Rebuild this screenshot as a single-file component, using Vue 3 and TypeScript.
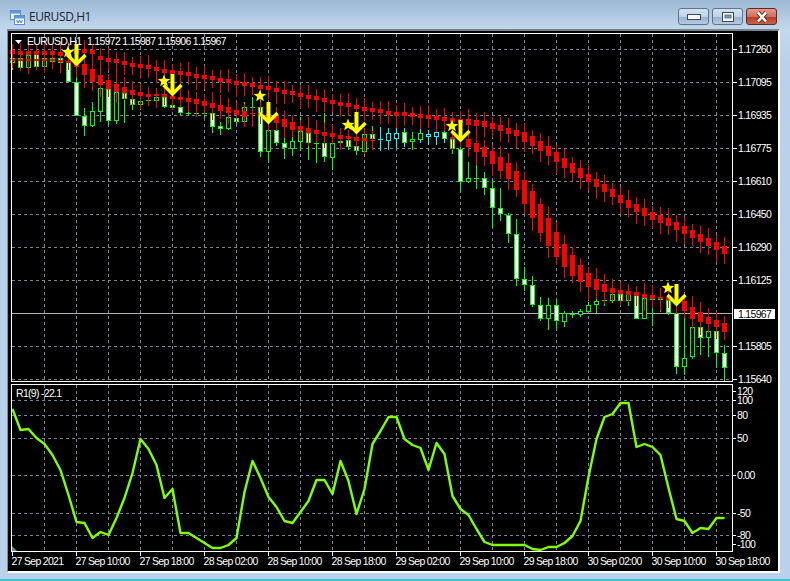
<script setup lang="ts">
type Col = "g" | "c" | "m";
type Bar = [number, number, number, number, number, Col];

// high, body top, body bottom, low (screen y), white body, colour
const bars: Bar[] = [
  [56, 58, 63, 70, 0, "m"], [55, 58, 68, 71, 1, "m"], [52, 55, 68, 72, 0, "m"], [50, 54, 67, 70, 1, "m"],
  [53, 58, 67, 71, 0, "m"], [55, 58, 62, 67, 0, "m"], [55, 58, 63, 68, 1, "m"], [60, 62, 82, 82, 1, "g"],
  [75, 82, 116, 116, 1, "g"], [108, 116, 126, 136, 1, "g"], [102, 111, 126, 127, 0, "g"], [84, 88, 112, 122, 0, "g"],
  [80, 89, 121, 125, 1, "g"], [85, 92, 121, 124, 0, "g"], [88, 93, 99, 123, 1, "g"], [95, 99, 105, 110, 1, "g"],
  [97, 101, 105, 110, 0, "g"], [95, 100, 100, 105, 0, "g"], [93, 97, 101, 108, 0, "g"], [92, 97, 107, 108, 1, "g"],
  [100, 105, 108, 110, 1, "g"], [104, 107, 113, 115, 1, "g"], [110, 113, 113, 116, 0, "g"], [111, 113, 113, 116, 0, "g"],
  [110, 113, 113, 118, 0, "g"], [108, 113, 127, 133, 1, "g"], [122, 126, 129, 135, 1, "g"], [112, 117, 129, 130, 0, "g"],
  [115, 118, 122, 125, 1, "g"], [102, 107, 122, 124, 0, "g"], [97, 107, 107, 122, 0, "g"], [100, 107, 152, 157, 1, "g"],
  [125, 130, 152, 162, 0, "g"], [122, 130, 143, 146, 1, "g"], [138, 143, 148, 159, 1, "g"], [133, 141, 149, 156, 0, "g"],
  [117, 131, 142, 151, 0, "g"], [120, 133, 143, 160, 1, "g"], [121, 143, 143, 163, 0, "g"], [113, 143, 157, 162, 1, "g"],
  [130, 143, 158, 170, 0, "g"], [135, 141, 143, 146, 0, "g"], [130, 140, 147, 150, 1, "g"], [140, 146, 151, 155, 1, "g"],
  [130, 134, 152, 155, 0, "g"], [126, 134, 139, 143, 1, "g"], [127, 139, 139, 151, 0, "c"], [128, 133, 141, 150, 0, "c"],
  [128, 133, 139, 148, 0, "c"], [128, 132, 143, 147, 1, "m"], [132, 139, 142, 150, 0, "g"], [128, 133, 140, 143, 0, "m"],
  [130, 134, 137, 145, 0, "c"], [127, 132, 137, 145, 0, "c"], [128, 132, 139, 143, 1, "m"], [135, 139, 149, 154, 1, "g"],
  [140, 149, 182, 193, 1, "g"], [162, 178, 182, 183, 0, "g"], [162, 178, 178, 189, 0, "g"], [172, 178, 188, 195, 1, "g"],
  [180, 188, 208, 228, 1, "g"], [188, 208, 214, 221, 1, "g"], [213, 215, 234, 243, 1, "g"], [219, 234, 279, 286, 1, "g"],
  [267, 279, 285, 291, 1, "g"], [276, 285, 305, 307, 1, "g"], [297, 305, 319, 321, 1, "g"], [298, 305, 319, 330, 0, "g"],
  [299, 305, 321, 329, 1, "g"], [311, 313, 322, 327, 0, "g"], [311, 314, 314, 318, 0, "g"], [309, 311, 315, 317, 0, "g"],
  [302, 305, 312, 313, 0, "g"], [298, 301, 305, 313, 0, "g"], [296, 300, 300, 306, 0, "g"], [290, 294, 301, 303, 0, "g"],
  [290, 294, 301, 304, 1, "g"], [291, 294, 301, 306, 0, "g"], [288, 295, 319, 319, 1, "g"], [293, 298, 319, 319, 0, "g"],
  [293, 299, 299, 326, 0, "g"], [288, 299, 299, 312, 0, "g"], [296, 300, 313, 315, 1, "g"], [305, 313, 367, 374, 1, "g"],
  [313, 358, 367, 375, 0, "g"], [322, 327, 357, 359, 0, "g"], [320, 327, 338, 355, 1, "g"], [328, 331, 338, 357, 0, "g"],
  [328, 331, 353, 368, 1, "g"], [345, 353, 368, 381, 1, "g"],
];

const upperMid = [
  51.5, 52.5, 53, 53, 53, 53, 54, 54, 52, 50.5, 51.7, 58, 60, 61, 63, 64.5, 66, 67, 68.7, 71, 71.7, 73, 74, 75.5, 77, 77.7,
  80, 80.7, 83, 83.7, 85, 86.5, 88, 90, 91.7, 93, 95, 96.7, 98, 100, 102, 104, 105, 107, 108.7, 110, 111, 112.7, 113.7, 114,
  115, 116, 117, 118, 119, 120, 120.7, 121.7, 122.7, 124, 126, 128, 130.7, 133, 136.7, 141, 145.7, 151, 157, 163, 168, 173,
  178, 183, 188, 193, 198.5, 204, 207.5, 211.5, 215.5, 219, 222, 226, 230, 233.5, 237.5, 241.5, 246, 249.5,
];

// lower band bodies, [0, 0] where it is hidden behind the price bars
const lowerBody: [number, number][] = [
  [59, 61], [59, 61], [59, 61], [59, 61], [59, 61], [59, 61], [60, 62], [61, 63], [63, 67], [64, 75], [69, 82], [75, 85],
  [80, 89], [84, 92], [87, 93], [90, 95], [92, 96], [94, 97], [94, 96], [94, 97], [96, 99], [97, 100], [98, 102], [99, 104],
  [101, 106], [103, 108], [105, 111], [107, 113], [110, 115], [111, 117], [113, 114], [113, 115], [114, 120], [116, 123],
  [119, 127], [122, 130], [126, 131], [128, 133], [130, 134], [132, 136], [133, 137], [135, 139], [136, 139], [137, 141],
  [138, 141], [140, 141], [0, 0], [0, 0], [0, 0], [0, 0], [0, 0], [0, 0], [0, 0], [0, 0], [0, 0], [137, 139], [137, 140],
  [139, 147], [143, 152], [147, 157], [151, 164], [157, 171], [163, 179], [171, 190], [180, 204], [191, 218], [204, 233],
  [218, 246], [232, 257], [244, 267], [255, 276], [265, 282], [273, 287], [279, 290], [284, 292], [288, 293], [290, 294],
  [291, 295], [292, 296], [294, 298], [295, 299], [297, 299], [297, 300], [299, 303], [301, 311], [307, 319], [312, 322],
  [317, 324], [320, 327], [323, 332],
];

const rsi = [
  409, 430, 429, 438, 444, 455, 470, 495, 522, 523, 538, 532, 535, 518, 498, 473, 439, 449, 465, 498, 489, 533, 533, 538,
  543, 548, 548, 545, 538, 492, 461, 478, 497, 507, 521, 523, 512, 501, 480, 480, 494, 461, 481, 514, 489, 444, 431, 417,
  417, 439, 445, 448, 470, 443, 454, 496, 509, 515, 529, 542, 545, 545, 545, 545, 545, 549, 550, 547, 547, 543, 536, 521,
  477, 439, 417, 414, 403, 403, 447, 444, 447, 455, 488, 519, 521, 533, 528, 529, 518, 518,
];

const px = (i: number) => 12 + 8 * i;

const candles = bars.map(([hi, top, bot, lo, white, col], i) => ({
  x: px(i),
  hi,
  lo,
  top,
  h: Math.max(bot - top, 1),
  fill: white ? "#ffffff" : "#000000",
  wick: col === "g" ? "#00ff00" : "#00ffff",
  body: col === "c" ? "#00ffff" : "#00ff00",
}));

const upper = upperMid.map((m, i) => {
  const half = i < 57 ? 2 : i < 64 ? 3 : i < 72 ? 5 : 4;
  return {
    x: px(i),
    top: Math.round(m - half),
    h: half * 2,
    hi: Math.round(m - half - 6 - (i * 7) % 5),
    lo: Math.round(m + half + 8 + (i * 3) % 5),
  };
});

const lower = lowerBody
  .map(([t, b], i) => ({
    x: px(i),
    top: t,
    h: b - t,
    hi: t - 6 - (i * 5) % 6,
    lo: b + 7 + (i * 3) % 7,
  }))
  .filter((b) => b.h > 0);

const signals = [
  { x: 76, y: 65, sx: 68, sy: 52 },
  { x: 172, y: 95, sx: 164, sy: 81 },
  { x: 268, y: 123, sx: 260, sy: 96 },
  { x: 356, y: 133, sx: 348, sy: 125 },
  { x: 460, y: 141, sx: 452, sy: 126 },
  { x: 676, y: 305, sx: 668, sy: 288 },
];

const starPoints = (cx: number, cy: number) => {
  const pts: string[] = [];
  for (let k = 0; k < 10; k++) {
    const r = k % 2 ? 2.8 : 6.6;
    const a = (Math.PI / 5) * k - Math.PI / 2;
    pts.push(`${(cx + r * Math.cos(a)).toFixed(1)},${(cy + r * Math.sin(a)).toFixed(1)}`);
  }
  return pts.join(" ");
};

const linePoints = rsi.map((y, i) => `${px(i) + 0.5},${y}`).join(" ");

const gridX = Array.from({ length: 22 }, (_, k) => 44 + 32 * k);
const priceAxis = [
  { y: 49, t: "1.17260" }, { y: 82, t: "1.17095" }, { y: 115, t: "1.16935" }, { y: 148, t: "1.16775" },
  { y: 181, t: "1.16610" }, { y: 214, t: "1.16450" }, { y: 247, t: "1.16290" }, { y: 280, t: "1.16125" },
  { y: 346, t: "1.15805" }, { y: 379, t: "1.15640" },
];
const subGrid = [400, 415, 438, 475, 513, 535];
const subAxis = [
  { y: 391, t: "120" }, { y: 400, t: "100" }, { y: 415, t: "80" }, { y: 438, t: "50" },
  { y: 475, t: "0.00" }, { y: 513, t: "-50" }, { y: 535, t: "-80" }, { y: 544, t: "-100" },
];
const dates = [
  "27 Sep 2021", "27 Sep 10:00", "27 Sep 18:00", "28 Sep 02:00", "28 Sep 10:00", "28 Sep 18:00",
  "29 Sep 02:00", "29 Sep 10:00", "29 Sep 18:00", "30 Sep 02:00", "30 Sep 10:00", "30 Sep 18:00",
];
</script>

<template>
  <div class="window">
    <div class="titlebar">
      <svg class="app-icon" width="15" height="15" viewBox="0 0 15 15">
        <rect x="0.5" y="0.5" width="10" height="9" fill="#e8f2fc" stroke="#5b8fd0" />
        <rect x="1" y="1" width="9" height="2.5" fill="#5b97de" />
        <rect x="4.5" y="5.5" width="10" height="9" fill="#f2f8fe" stroke="#5b8fd0" />
        <rect x="5" y="6" width="9" height="2.5" fill="#5b97de" />
        <path d="M6.5 10l1.5 3 1.5-3 1.5 3 1.5-3" fill="none" stroke="#4a78b0" />
      </svg>
      <span class="title">EURUSD,H1</span>
      <div class="buttons">
        <div class="btn">
          <svg width="14" height="6" viewBox="0 0 14 6"><rect x="0.5" y="0.5" width="13" height="5" fill="#f4f6f8" stroke="#3c4a5c" /></svg>
        </div>
        <div class="btn">
          <svg width="12" height="10" viewBox="0 0 12 10"><rect x="0.5" y="0.5" width="11" height="9" fill="#f4f6f8" stroke="#3c4a5c" /><rect x="3" y="3" width="6" height="3" fill="#7f9ab6" stroke="#3c4a5c" stroke-width="0.6" /></svg>
        </div>
        <div class="btn close">
          <svg width="14" height="12" viewBox="0 0 14 12"><path d="M3 1.5l8 9M11 1.5l-8 9" stroke="#5c2a22" stroke-width="4.2" /><path d="M3 1.5l8 9M11 1.5l-8 9" stroke="#ffffff" stroke-width="2.6" /></svg>
        </div>
      </div>
    </div>

    <div class="frame">
      <svg class="chart" width="770" height="540" viewBox="8 31 770 540">
        <g shape-rendering="crispEdges">
          <!-- grid -->
          <g class="grid">
            <line v-for="g in priceAxis" :key="g.t" x1="12" x2="732" :y1="g.y + 0.5" :y2="g.y + 0.5" />
            <line v-for="y in subGrid" :key="y" x1="12" x2="732" :y1="y + 0.5" :y2="y + 0.5" />
            <template v-for="x in gridX" :key="x">
              <line :x1="x + 0.5" :x2="x + 0.5" y1="34" y2="382" />
              <line :x1="x + 0.5" :x2="x + 0.5" y1="385" y2="551" />
            </template>
          </g>
          <line class="price-line" x1="12" x2="733" y1="313.5" y2="313.5" />

          <!-- price bars -->
          <g v-for="c in candles" :key="c.x">
            <rect :x="c.x" :y="c.hi" width="1" :height="c.lo - c.hi" :fill="c.wick" />
            <rect :x="c.x - 2" :y="c.top" width="5" :height="c.h" :fill="c.body" />
            <rect v-if="c.h > 2" :x="c.x - 1" :y="c.top + 1" width="3" :height="c.h - 2" :fill="c.fill" />
          </g>

          <!-- both bands -->
          <g v-for="b in upper" :key="'u' + b.x" fill="#ff0000">
            <rect :x="b.x" :y="b.hi" width="1" :height="b.lo - b.hi" />
            <rect :x="b.x - 2" :y="b.top" width="5" :height="b.h" />
          </g>
          <g v-for="b in lower" :key="'l' + b.x" fill="#ff0000">
            <rect :x="b.x" :y="b.hi" width="1" :height="b.lo - b.hi" />
            <rect :x="b.x - 2" :y="b.top" width="5" :height="b.h" />
          </g>
        </g>

        <!-- sell arrows and stars -->
        <g v-for="s in signals" :key="s.x">
          <polygon :points="starPoints(s.sx, s.sy)" fill="#ffff00" />
          <path
            :d="`M${s.x + 0.5} ${s.y - 21}V${s.y - 1}`"
            fill="none"
            stroke="#ffff00"
            stroke-width="4"
          />
          <path
            :d="`M${s.x - 8.5} ${s.y - 10}L${s.x + 0.5} ${s.y - 1}L${s.x + 9.5} ${s.y - 10}`"
            fill="none"
            stroke="#ffff00"
            stroke-width="3.4"
          />
        </g>

        <!-- RSI -->
        <polyline class="rsi" :points="linePoints" />
        <polygon points="12,551 12,546 17,551" fill="#778899" />

        <g shape-rendering="crispEdges">
          <rect class="box" x="11.5" y="33.5" width="721" height="348" />
          <rect class="box" x="11.5" y="384.5" width="721" height="167" />
          <line v-for="g in priceAxis" :key="'t' + g.t" class="tick" x1="733" x2="737" :y1="g.y + 0.5" :y2="g.y + 0.5" />
          <line v-for="a in subAxis" :key="'s' + a.t" class="tick" x1="733" x2="736" :y1="a.y + 0.5" :y2="a.y + 0.5" />
          <line v-for="(d, k) in dates" :key="'d' + d" class="tick" :x1="12.5 + 64 * k" :x2="12.5 + 64 * k" y1="552" y2="556" />
          <rect x="734" y="309" width="41" height="10" fill="#ffffff" />
        </g>

        <!-- legends and axes -->
        <polygon points="15,40 22,40 18.5,44" fill="#ffffff" />
        <text class="label" x="27" y="45">EURUSD,H1</text>
        <text class="label" x="87" y="45">1.15972 1.15987 1.15906 1.15967</text>
        <text class="label" x="16" y="397">R1(9) -22.1</text>
        <text v-for="g in priceAxis" :key="'p' + g.t" class="label" x="738" :y="g.y + 4">{{ g.t }}</text>
        <text class="label dark" x="738" y="318">1.15967</text>
        <text v-for="a in subAxis" :key="'a' + a.t" class="label" x="737" :y="a.y + 4">{{ a.t }}</text>
        <text v-for="(d, k) in dates" :key="'x' + d" class="label" :x="11.5 + 64 * k" y="565">{{ d }}</text>
      </svg>
    </div>
  </div>
</template>

<style scoped>
.window {
  width: 790px;
  height: 581px;
  box-sizing: border-box;
  display: flex;
  flex-direction: column;
  padding: 0 10px 0 7px;
  background: linear-gradient(to bottom, #9db9d6 0, #c3d8ec 30px, #b9d1ea 60px);
  border-bottom: 2px solid #3fc5d8;
  overflow: hidden;
}

.titlebar {
  height: 29px;
  flex: none;
  display: flex;
  align-items: flex-start;
}

.app-icon {
  margin: 10px 0 0 3px;
}

.title {
  margin: 9px 0 0 4px;
  font: 12px/16px "Open Sans", "Noto Sans", sans-serif;
  letter-spacing: -0.4px;
  color: #1c2433;
}

.buttons {
  margin: 8px 3px 0 auto;
  display: flex;
  gap: 3px;
}

.btn {
  width: 31px;
  height: 17px;
  box-sizing: border-box;
  display: flex;
  align-items: center;
  justify-content: center;
  border: 1px solid #5f7489;
  border-radius: 3px;
  background: linear-gradient(to bottom, #d3e2f1 0, #bfd3e7 50%, #98b3cf 55%, #b4cbe2 100%);
}

.close {
  border-color: #5c2a22;
  background: linear-gradient(to bottom, #e39a8a 0, #d2705c 50%, #b83a26 55%, #c9624c 100%);
}

.frame {
  flex: none;
  width: 773px;
  border-top: 2px solid #74848f;
  border-left: 1px solid #7d8d9c;
  border-right: 2px solid #ffffff;
  border-bottom: 2px solid #ffffff;
  box-sizing: border-box;
  height: 544px;
  background: #000000;
}

.chart {
  display: block;
}

.grid line {
  stroke: #778899;
  stroke-dasharray: 3 3;
}

.price-line {
  stroke: #b0b0b0;
}

.rsi {
  fill: none;
  stroke: #7fff00;
  stroke-width: 2.4;
  stroke-linejoin: round;
}

.box {
  fill: none;
  stroke: #ffffff;
}

.tick {
  stroke: #ffffff;
}

.label {
  font: 10.5px "Liberation Sans", Arial, sans-serif;
  letter-spacing: -0.7px;
  fill: #ffffff;
}

.dark {
  fill: #000000;
}
</style>

<style>
body {
  background: #b9d1ea;
}
</style>
